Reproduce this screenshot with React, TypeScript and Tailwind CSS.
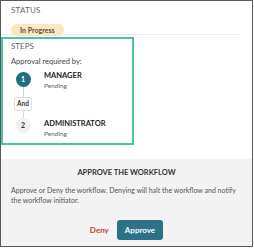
export default function App() {
  return (
    <div className="w-[253px] h-[247px] border border-[#5a5a5a] bg-white flex flex-col font-['Lato',sans-serif] text-[#333]">
      {/* Status */}
      <div className="h-[34px] mr-[12px] border-b border-[#ececec] pl-[10px] pt-[4px]">
        <div className="text-[8px] leading-[10px] text-[#666] tracking-[0.2px]">STATUS</div>
        <div className="mt-[3px] inline-flex items-center h-[12px] px-[9px] rounded-full bg-[#fbe7c0] text-[7px] font-bold text-[#5e5032]">
          In Progress
        </div>
      </div>

      {/* Steps */}
      <div className="mt-[2px] w-[133px] h-[108px] border-2 border-[#4cc2a7] pl-[8px] pt-[2px]">
        <div className="text-[8px] leading-[10px] text-[#666]">STEPS</div>
        <div className="mt-[6px] text-[7.5px] leading-[10px] text-[#444]">Approval required by:</div>

        <div className="mt-[5px] ml-[3px] flex">
          <div className="w-[18px] flex flex-col items-center">
            <div className="w-[15px] h-[15px] rounded-full bg-[#1f6f82] text-white text-[7px] font-bold flex items-center justify-center">
              1
            </div>
            <div className="w-px h-[10px] bg-[#d6d6d6]" />
            <div className="w-[18px] h-[14px] border border-[#dcdcdc] rounded-[2px] bg-white text-[6.5px] font-bold flex items-center justify-center text-[#333]">
              And
            </div>
            <div className="w-px h-[7px] bg-[#d6d6d6]" />
            <div className="w-[15px] h-[15px] rounded-full bg-[#f0f0f0] text-[#333] text-[7px] font-bold flex items-center justify-center">
              2
            </div>
          </div>
          <div className="ml-[12px] flex flex-col">
            <div className="mt-[-1px]">
              <div className="text-[7.5px] leading-[10px] font-bold text-[#222]">MANAGER</div>
              <div className="text-[6.5px] leading-[10px] text-[#666]">Pending</div>
            </div>
            <div className="mt-[28px]">
              <div className="text-[7.5px] leading-[10px] font-bold text-[#222]">ADMINISTRATOR</div>
              <div className="text-[6.5px] leading-[10px] text-[#666]">Pending</div>
            </div>
          </div>
        </div>
      </div>

      {/* Approve */}
      <div className="mt-[14px] flex-1 bg-[#f3f3f4] px-[10px] pt-[9px]">
        <div className="text-center text-[7.5px] leading-[10px] font-bold text-[#333]">APPROVE THE WORKFLOW</div>
        <p className="mt-[7px] text-[7px] leading-[10px] text-[#555]">
          Approve or Deny the workflow. Denying will halt the workflow and notify the workflow initiator.
        </p>
        <div className="mt-[15px] flex justify-center items-center gap-[8px]">
          <button className="text-[8px] font-bold text-[#c4452c]">Deny</button>
          <button className="h-[20px] px-[8px] rounded-[3px] bg-[#2b7286] text-white text-[8px] font-bold">Approve</button>
        </div>
      </div>
    </div>
  );
}
